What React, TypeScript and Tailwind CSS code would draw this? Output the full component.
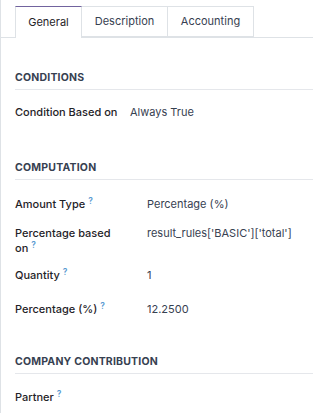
const Help = () => (
  <span className="relative -top-[4px] ml-[3px] text-[8.5px] font-semibold leading-none text-[#5b9bd1]">?</span>
)

function Section({ title, children }: { title: string; children: React.ReactNode }) {
  return (
    <div className="pl-[14px]">
      <div className="border-b border-[#e5e7eb] pb-[3px] text-[10.5px] font-bold uppercase leading-[16px] tracking-[0.2px] text-[#374151]">
        {title}
      </div>
      {children}
    </div>
  )
}

function Row({
  label,
  help,
  value,
  valueX = 132,
  className = '',
}: {
  label: React.ReactNode
  help?: boolean
  value?: string
  valueX?: number
  className?: string
}) {
  return (
    <div className={`flex items-start ${className}`}>
      <div
        className="shrink-0 text-[11px] font-medium leading-[15px] text-[#1f2328]"
        style={{ width: valueX - 15 }}
      >
        {label}
        {help && <Help />}
      </div>
      {value && <div className="text-[11px] leading-[15px] text-[#374151]">{value}</div>}
    </div>
  )
}

export default function App() {
  return (
    <div
      className="h-[413px] w-[313px] overflow-hidden border-l border-[#dee2e6] bg-white"
      style={{ fontFamily: 'Inter, "Noto Sans", sans-serif' }}
    >
      <div className="flex border-b border-[#dee2e6] pl-[14px] pt-[6px] text-[11px] text-[#374151]">
        <div className="-mb-px flex h-[32px] w-[67px] items-center justify-center border border-b-0 border-[#dee2e6] border-t-[#71639e] bg-white text-[#1f2328]">
          General
        </div>
        <div className="flex h-[31px] w-[86px] items-center justify-center border border-l-0 border-[#dee2e6]">
          Description
        </div>
        <div className="flex h-[31px] w-[86px] items-center justify-center border border-l-0 border-[#dee2e6]">
          Accounting
        </div>
      </div>

      <div className="pt-[32px]">
        <Section title="Conditions">
          <Row className="mt-[15px]" label="Condition Based on" value="Always True" valueX={130} />
        </Section>
      </div>

      <div className="pt-[40px]">
        <Section title="Computation">
          <Row className="mt-[17px]" label="Amount Type" help value="Percentage (%)" valueX={147} />
          <Row
            className="mt-[14px]"
            label={
              <>
                Percentage based
                <br />
                on
              </>
            }
            help
            value="result_rules['BASIC']['total']"
            valueX={147}
          />
          <Row className="mt-[12px]" label="Quantity" help value="1" valueX={147} />
          <Row className="mt-[19px]" label="Percentage (%)" help value="12.2500" valueX={147} />
        </Section>
      </div>

      <div className="pt-[37px]">
        <Section title="Company Contribution">
          <Row className="mt-[16px]" label="Partner" help />
        </Section>
      </div>
    </div>
  )
}
